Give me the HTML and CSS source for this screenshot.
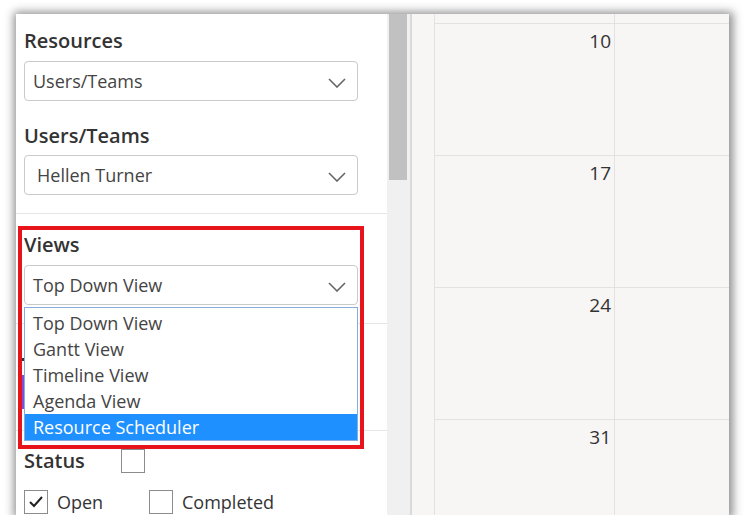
FILE: index.html
```html
<!DOCTYPE html>
<html>
<head>
<meta charset="utf-8">
<link rel="stylesheet" href="styles.css">
</head>
<body>
<div class="frame">
  <aside class="sidebar">
    <section class="sec sec-top">
      <div class="label">Resources</div>
      <div class="select">
        <span>Users/Teams</span>
        <svg class="chev" width="18" height="10" viewBox="0 0 18 10"><path d="M1 1 L9 9 L17 1" fill="none" stroke="#666" stroke-width="1.6"/></svg>
      </div>
      <div class="label label-2">Users/Teams</div>
      <div class="select select-indent">
        <span>Hellen Turner</span>
        <svg class="chev" width="18" height="10" viewBox="0 0 18 10"><path d="M1 1 L9 9 L17 1" fill="none" stroke="#666" stroke-width="1.6"/></svg>
      </div>
    </section>
    <section class="sec sec-views">
      <div class="label">Views</div>
      <div class="select-wrap">
        <div class="select">
          <span>Top Down View</span>
          <svg class="chev" width="18" height="10" viewBox="0 0 18 10"><path d="M1 1 L9 9 L17 1" fill="none" stroke="#666" stroke-width="1.6"/></svg>
        </div>
        <ul class="list">
          <li>Top Down View</li>
          <li>Gantt View</li>
          <li>Timeline View</li>
          <li>Agenda View</li>
          <li class="active">Resource Scheduler</li>
        </ul>
      </div>
      <div class="highlight"></div>
    </section>
    <section class="sec sec-hidden">
      <div class="dot"></div>
      <div class="swatch"></div>
    </section>
    <section class="sec sec-status">
      <div class="status-row">
        <div class="label status-label">Status</div>
        <span class="box"></span>
      </div>
      <div class="check-row">
        <label class="check check-open"><span class="box checked"><svg width="16" height="14" viewBox="0 0 16 14"><path d="M2 7 L6 11 L14 2" fill="none" stroke="#222" stroke-width="2"/></svg></span><span class="check-text">Open</span></label>
        <label class="check"><span class="box"></span><span class="check-text">Completed</span></label>
      </div>
    </section>
  </aside>
  <div class="scroll"><div class="thumb"></div></div>
  <div class="gutter"></div>
  <div class="calendar">
    <div class="cell"></div>
    <div class="cell"></div>
    <div class="cell"><span>10</span></div>
    <div class="cell"></div>
    <div class="cell"><span>17</span></div>
    <div class="cell"></div>
    <div class="cell"><span>24</span></div>
    <div class="cell"></div>
    <div class="cell"><span>31</span></div>
    <div class="cell"></div>
  </div>
</div>
</body>
</html>
```

FILE: styles.css
```css
* { box-sizing: border-box; }
html, body { margin: 0; padding: 0; background: #fff; }
body {
  padding: 14px 0 0 16px;
  font-family: "Open Sans", "Liberation Sans", sans-serif;
  color: #333;
}
.frame {
  width: 713px;
  height: 501px;
  display: flex;
  overflow: hidden;
  background: #fff;
  box-shadow: 1px 1px 9px 3px rgba(0,0,0,0.45);
}
.sidebar {
  width: 371px;
  flex: none;
  background: #fff;
  overflow: hidden;
}
.sec {
  position: relative;
  padding: 0 29px 18px 8px;
  border-bottom: 1px solid #e6e6e6;
}
.sec-top { padding-top: 14px; }
.sec-views { padding-top: 18px; }
.label {
  font-size: 20px;
  line-height: 26px;
  font-weight: 600;
  color: #333;
  margin-bottom: 7px;
}
.label-2 { margin-top: 22px; margin-bottom: 6px; }
.select {
  position: relative;
  height: 40px;
  border: 1px solid #cacaca;
  border-radius: 4px;
  padding-left: 8px;
  display: flex;
  align-items: center;
  font-size: 18px;
  color: #444;
  background: #fff;
}
.select-indent { padding-left: 12px; }
.chev {
  position: absolute;
  right: 11px;
  top: 16px;
}
.select-wrap { position: relative; }
.list {
  position: absolute;
  left: 0;
  top: 42px;
  width: 334px;
  margin: 0;
  padding: 2px 0 0;
  list-style: none;
  background: #fff;
  border: 1px solid #86ade0;
  z-index: 2;
}
.list li {
  height: 26px;
  line-height: 26px;
  padding-left: 8px;
  font-size: 18px;
  color: #444;
}
.list li.active { background: #1e90ff; color: #fff; }
.highlight {
  position: absolute;
  left: 2px;
  top: 12px;
  width: 346px;
  height: 223px;
  border: 4px solid #e8141b;
  z-index: 3;
  pointer-events: none;
}
.sec-hidden {
  height: 107px;
  padding-top: 34px;
  padding-left: 6px;
}
.dot {
  width: 3px;
  height: 3px;
  background: #333;
  margin-bottom: 14px;
}
.swatch {
  width: 200px;
  height: 34px;
  background: #7b4fd6;
}
.sec-status {
  border-bottom: none;
  padding-top: 17px;
}
.status-row {
  display: flex;
  align-items: center;
}
.status-label { width: 97px; margin: 0; }
.box {
  width: 24px;
  height: 24px;
  border: 1px solid #8c8c8c;
  background: #fff;
  flex: none;
  display: flex;
  align-items: center;
  justify-content: center;
}
.check-row {
  display: flex;
  margin-top: 16px;
}
.check {
  display: flex;
  align-items: center;
  font-size: 18px;
  color: #333;
}
.check-open { width: 125px; }
.check-text { margin-left: 9px; }
.scroll {
  width: 25px;
  flex: none;
  background: #f0f0f0;
  border-right: 2px solid #dadada;
  padding-left: 2px;
}
.thumb {
  width: 18px;
  height: 166px;
  background: #c1c1c1;
}
.gutter {
  width: 22px;
  flex: none;
  background: #f7f6f4;
}
.calendar {
  flex: 1;
  background: #f7f6f4;
  border-left: 1px solid #e2e2e2;
  display: grid;
  grid-template-columns: 180px 180px;
  grid-auto-rows: 132px;
  margin-top: -122px;
  height: 700px;
}
.cell {
  border-right: 1px solid #e2e2e2;
  border-bottom: 1px solid #e2e2e2;
  text-align: right;
  padding: 4px 3px 0 0;
  font-size: 19px;
  line-height: 26px;
  color: #333;
}
```
